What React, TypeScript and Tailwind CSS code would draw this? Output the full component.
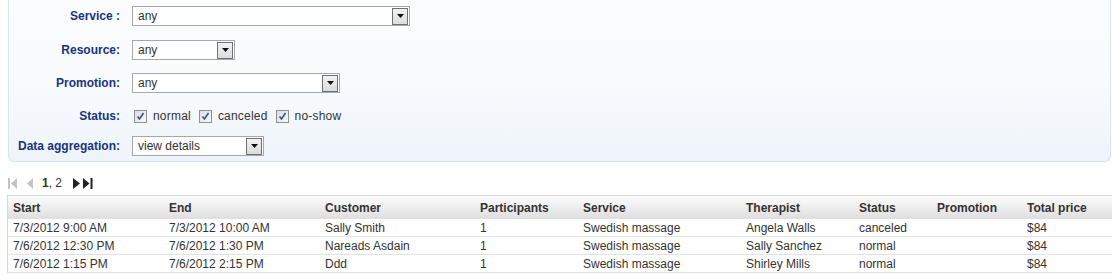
import React from "react";

const font = { fontFamily: '"Liberation Sans", Arial, sans-serif' };

function Select({ width, value }: { width: string; value: string }) {
  return (
    <div className={`${width} h-[20px] border border-[#a7a7a7] bg-white flex items-center justify-between`}>
      <span className="pl-[5px] text-[12px] text-[#333] leading-none">{value}</span>
      <span className="w-[16px] h-[17px] mr-[1px] border border-[#707070] bg-linear-to-b from-[#f2f2f2] to-[#dcdcdc] flex items-center justify-center">
        <svg width="7" height="4" viewBox="0 0 7 4">
          <path d="M0 0h7L3.5 4z" fill="#111" />
        </svg>
      </span>
    </div>
  );
}

function Check({ label }: { label: string }) {
  return (
    <span className="flex items-center">
      <span className="w-[13px] h-[13px] border border-[#8e8f8f] bg-linear-to-br from-[#dcdcdc] to-[#fafafa] flex items-center justify-center">
        <svg width="9" height="9" viewBox="0 0 9 9">
          <path d="M1.5 4.5 L3.5 7 L7.5 1" stroke="#3a4f9a" strokeWidth="1.6" fill="none" />
        </svg>
      </span>
      <span className="ml-[6px] mr-[8px] text-[12px] text-[#333] tracking-[0.2px]">{label}</span>
    </span>
  );
}

function Row({ label, children, className = "" }: { label: string; children: React.ReactNode; className?: string }) {
  return (
    <div className={`flex items-center ${className}`}>
      <div className="w-[113px] text-right font-bold text-[12px] text-[#17337f] pr-[2px]">{label}</div>
      <div className="ml-[10px] flex items-center">{children}</div>
    </div>
  );
}

const cols = [
  { h: "Start", w: "w-[156px]" },
  { h: "End", w: "w-[156px]" },
  { h: "Customer", w: "w-[155px]" },
  { h: "Participants", w: "w-[103px]" },
  { h: "Service", w: "w-[163px]" },
  { h: "Therapist", w: "w-[113px]" },
  { h: "Status", w: "w-[78px]" },
  { h: "Promotion", w: "w-[90px]" },
  { h: "Total price", w: "" },
];

const rows = [
  ["7/3/2012 9:00 AM", "7/3/2012 10:00 AM", "Sally Smith", "1", "Swedish massage", "Angela Walls", "canceled", "", "$84"],
  ["7/6/2012 12:30 PM", "7/6/2012 1:30 PM", "Nareads Asdain", "1", "Swedish massage", "Sally Sanchez", "normal", "", "$84"],
  ["7/6/2012 1:15 PM", "7/6/2012 2:15 PM", "Ddd", "1", "Swedish massage", "Shirley Mills", "normal", "", "$84"],
];

export default function App() {
  return (
    <div className="w-[1112px] h-[275px] bg-white overflow-hidden" style={font}>
      <div className="ml-[8px] mr-[1px] h-[162px] border-x border-b border-[#d3e4f4] rounded-b-[6px] bg-linear-to-b from-[#fbfcfe] via-[#f9fbfd] to-[#eef4fa] pt-[6px]">
        <Row label="Service :">
          <Select width="w-[278px]" value="any" />
        </Row>
        <Row label="Resource:" className="mt-[14px]">
          <Select width="w-[103px]" value="any" />
        </Row>
        <Row label="Promotion:" className="mt-[13px]">
          <Select width="w-[208px]" value="any" />
        </Row>
        <Row label="Status:" className="mt-[14px] h-[18px]">
          <span className="ml-[2px] flex items-center">
            <Check label="normal" />
            <Check label="canceled" />
            <Check label="no-show" />
          </span>
        </Row>
        <Row label="Data aggregation:" className="mt-[11px]">
          <Select width="w-[132px]" value="view details" />
        </Row>
      </div>

      <div className="ml-[8px] mt-[15px] h-[12px] flex items-center text-[12px] text-[#333]">
        <svg width="10" height="11" viewBox="0 0 10 11">
          <rect x="0" y="0" width="2" height="11" fill="#c4c4c4" />
          <path d="M9 0 L3 5.5 L9 11 Z" fill="#c4c4c4" />
        </svg>
        <svg width="9" height="11" viewBox="0 0 9 11" className="ml-[7px]">
          <path d="M8 0 L2 5.5 L8 11 Z" fill="#c4c4c4" />
        </svg>
        <span className="ml-[8px]"><b>1</b>, 2</span>
        <svg width="9" height="11" viewBox="0 0 9 11" className="ml-[10px]">
          <path d="M1 0 L8 5.5 L1 11 Z" fill="#222" />
        </svg>
        <svg width="10" height="11" viewBox="0 0 10 11" className="ml-[2px]">
          <path d="M0 0 L6.5 5.5 L0 11 Z" fill="#222" />
          <rect x="7.5" y="0" width="2" height="11" fill="#222" />
        </svg>
      </div>

      <div className="ml-[7px] mt-[6px] border-t border-l border-[#d8d8d8]">
        <div className="flex h-[23px] items-center bg-linear-to-b from-[#fdfdfd] to-[#dedede] font-bold text-[12px] text-[#333]">
          {cols.map((c) => (
            <div key={c.h} className={`${c.w} shrink-0 pl-[5px]`}>{c.h}</div>
          ))}
        </div>
        {rows.map((r, i) => (
          <div key={i} className="flex h-[18px] items-center border-b border-[#e2e2e2] text-[12px] text-[#333] bg-white">
            {r.map((v, j) => (
              <div key={j} className={`${cols[j].w} shrink-0 pl-[5px] whitespace-nowrap`}>{v}</div>
            ))}
          </div>
        ))}
      </div>
    </div>
  );
}
